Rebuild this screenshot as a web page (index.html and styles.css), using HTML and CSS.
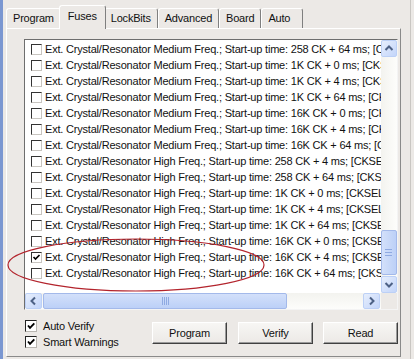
FILE: index.html
```html
<!DOCTYPE html>
<html>
<head>
<meta charset="utf-8">
<title>Fuses</title>
<link rel="stylesheet" href="styles.css">
</head>
<body>
<div class="window">
  <div class="tabs">
    <div class="tab">Program</div>
    <div class="tab active">Fuses</div>
    <div class="tab">LockBits</div>
    <div class="tab">Advanced</div>
    <div class="tab">Board</div>
    <div class="tab last">Auto</div>
  </div>
  <div class="panel">
    <div class="listbox">
      <div class="rows">
        <div class="row"><span class="cb"></span><span class="txt">Ext. Crystal/Resonator Medium Freq.; Start-up time: 258 CK + 64 ms; [CKSEL=1101 SUT=00]</span></div>
        <div class="row"><span class="cb"></span><span class="txt">Ext. Crystal/Resonator Medium Freq.; Start-up time: 1K CK + 0 ms; [CKSEL=1101 SUT=01]</span></div>
        <div class="row"><span class="cb"></span><span class="txt">Ext. Crystal/Resonator Medium Freq.; Start-up time: 1K CK + 4 ms; [CKSEL=1101 SUT=10]</span></div>
        <div class="row"><span class="cb"></span><span class="txt">Ext. Crystal/Resonator Medium Freq.; Start-up time: 1K CK + 64 ms; [CKSEL=1101 SUT=11]</span></div>
        <div class="row"><span class="cb"></span><span class="txt">Ext. Crystal/Resonator Medium Freq.; Start-up time: 16K CK + 0 ms; [CKSEL=1100 SUT=00]</span></div>
        <div class="row"><span class="cb"></span><span class="txt">Ext. Crystal/Resonator Medium Freq.; Start-up time: 16K CK + 4 ms; [CKSEL=1100 SUT=01]</span></div>
        <div class="row"><span class="cb"></span><span class="txt">Ext. Crystal/Resonator Medium Freq.; Start-up time: 16K CK + 64 ms; [CKSEL=1100 SUT=10]</span></div>
        <div class="row"><span class="cb"></span><span class="txt">Ext. Crystal/Resonator High Freq.; Start-up time: 258 CK + 4 ms; [CKSEL=1110 SUT=00]</span></div>
        <div class="row"><span class="cb"></span><span class="txt">Ext. Crystal/Resonator High Freq.; Start-up time: 258 CK + 64 ms; [CKSEL=1110 SUT=01]</span></div>
        <div class="row"><span class="cb"></span><span class="txt">Ext. Crystal/Resonator High Freq.; Start-up time: 1K CK + 0 ms; [CKSEL=1110 SUT=10]</span></div>
        <div class="row"><span class="cb"></span><span class="txt">Ext. Crystal/Resonator High Freq.; Start-up time: 1K CK + 4 ms; [CKSEL=1110 SUT=11]</span></div>
        <div class="row"><span class="cb"></span><span class="txt">Ext. Crystal/Resonator High Freq.; Start-up time: 1K CK + 64 ms; [CKSEL=1111 SUT=00]</span></div>
        <div class="row"><span class="cb"></span><span class="txt">Ext. Crystal/Resonator High Freq.; Start-up time: 16K CK + 0 ms; [CKSEL=1111 SUT=01]</span></div>
        <div class="row"><span class="cb checked"><svg viewBox="0 0 9 9" width="9" height="9"><path d="M1.5 4 L3.5 6 L7.5 2" fill="none" stroke="#000" stroke-width="1.7"/></svg></span><span class="txt">Ext. Crystal/Resonator High Freq.; Start-up time: 16K CK + 4 ms; [CKSEL=1111 SUT=10]</span></div>
        <div class="row"><span class="cb"></span><span class="txt">Ext. Crystal/Resonator High Freq.; Start-up time: 16K CK + 64 ms; [CKSEL=1111 SUT=11]</span></div>
      </div>
      <div class="vscroll">
        <div class="sbtn"><svg viewBox="0 0 14 15" width="14" height="15"><path d="M3.5 9 L7 5.5 L10.5 9" fill="none" stroke="#4d6185" stroke-width="2"/></svg></div>
        <div class="vthumb"><svg viewBox="0 0 8 7" width="8" height="7"><path d="M0 0.5 H7 M0 3.5 H7 M0 6.5 H7" stroke="#8faae2" stroke-width="1"/></svg></div>
        <div class="sbtn"><svg viewBox="0 0 14 15" width="14" height="15"><path d="M3.5 6 L7 9.5 L10.5 6" fill="none" stroke="#4d6185" stroke-width="2"/></svg></div>
      </div>
      <div class="hscroll">
        <div class="sbtn h"><svg viewBox="0 0 15 14" width="15" height="14"><path d="M9 3.5 L5.5 7 L9 10.5" fill="none" stroke="#4d6185" stroke-width="2"/></svg></div>
        <div class="hthumb"><svg viewBox="0 0 7 8" width="7" height="8"><path d="M0.5 0 V8 M2.5 0 V8 M4.5 0 V8 M6.5 0 V8" stroke="#8faae2" stroke-width="1"/></svg></div>
        <div class="sbtn h right"><svg viewBox="0 0 15 14" width="15" height="14"><path d="M6 3.5 L9.5 7 L6 10.5" fill="none" stroke="#4d6185" stroke-width="2"/></svg></div>
      </div>
      <div class="corner"></div>
    </div>
    <div class="bottom">
      <div class="opts">
        <label class="opt"><span class="box"><svg viewBox="0 0 10 10" width="10" height="10"><path d="M2 4.5 L4 6.8 L8.3 2.3" fill="none" stroke="#000" stroke-width="1.9"/></svg></span>Auto Verify</label>
        <label class="opt"><span class="box"><svg viewBox="0 0 10 10" width="10" height="10"><path d="M2 4.5 L4 6.8 L8.3 2.3" fill="none" stroke="#000" stroke-width="1.9"/></svg></span>Smart Warnings</label>
      </div>
      <div class="buttons">
        <button class="btn gap11">Program</button>
        <button class="btn gap10">Verify</button>
        <button class="btn">Read</button>
      </div>
    </div>
  </div>
  <svg class="annot" viewBox="0 0 414 359" width="414" height="359"><ellipse cx="136" cy="265" rx="128" ry="26" fill="none" stroke="#b3242d" stroke-width="1.2"/></svg>
</div>
</body>
</html>
```

FILE: styles.css
```css
* { box-sizing: border-box; }
html, body { margin: 0; padding: 0; }
body {
  background: #ece9e6;
  font-family: "Liberation Sans", Arial, sans-serif;
  font-size: 11px;
  letter-spacing: -0.2px;
  color: #111;
}
.window {
  position: relative;
  width: 411px;
  height: 359px;
  display: flex;
  flex-direction: column;
  padding: 5px 9px 0 3px;
  border-left: 3px solid #7b97d1;
  border-right: 1px solid #c9c6c2;
}
.tabs {
  display: flex;
  align-items: flex-end;
  height: 23px;
}
.tab {
  height: 20px;
  padding: 0 6px;
  line-height: 19px;
  border: 1px solid;
  border-bottom: 0;
  border-color: #fff #7f7f7f transparent #fff;
  border-radius: 3px 3px 0 0;
  white-space: nowrap;
  background: #ece9e6;
}
.tab.last { padding: 0 12px 0 6px; }
.tab.active {
  position: relative;
  z-index: 2;
  height: 24px;
  margin: 0 -2px -1px -2px;
  padding: 0 8px;
  line-height: 20px;
}
.panel {
  height: 329px;
  border: 1px solid;
  border-color: #fff #8a8a8a #8a8a8a #fff;
  padding: 10px 3px 0 17px;
  display: flex;
  flex-direction: column;
}
.listbox {
  width: 374px;
  height: 271px;
  border: 1px solid;
  border-color: #6e6e6e #f4f4f4 #f4f4f4 #6e6e6e;
  background: #fff;
  display: grid;
  grid-template-columns: 356px 16px;
  grid-template-rows: 253px 16px;
}
.rows {
  overflow: hidden;
  padding-top: 1px;
}
.row {
  height: 16px;
  display: flex;
  align-items: center;
  padding-left: 6px;
  white-space: nowrap;
}
.cb {
  flex: none;
  width: 11px;
  height: 11px;
  border: 1px solid;
  border-color: #333 #c8c5c0 #c8c5c0 #333;
  background: #fff;
  margin-right: 3px;
  display: flex;
  align-items: center;
  justify-content: center;
}
.vscroll {
  display: flex;
  flex-direction: column;
  background: linear-gradient(to right, #f3f3ef, #fdfdfb);
}
.sbtn {
  flex: none;
  width: 16px;
  height: 17px;
  border: 1px solid #bcd0f6;
  border-radius: 2px;
  background: linear-gradient(to bottom right, #e6eefc, #c3d5fa);
  display: flex;
  align-items: center;
  justify-content: center;
}
.sbtn.h {
  width: 17px;
  height: 16px;
}
.sbtn.right { margin-right: 1px; }
.vthumb {
  margin-top: auto;
  margin-bottom: 1px;
  height: 45px;
  border: 1px solid #a3b9ea;
  border-radius: 2px;
  background: linear-gradient(to right, #d3e0fa, #bcd0f7);
  display: flex;
  align-items: center;
  justify-content: center;
}
.hscroll {
  display: flex;
  background: linear-gradient(to bottom, #f3f3ef, #fdfdfb);
}
.hthumb {
  width: 244px;
  margin-left: 1px;
  margin-right: auto;
  border: 1px solid #a3b9ea;
  border-radius: 2px;
  background: linear-gradient(to bottom, #d3e0fa, #bcd0f7);
  display: flex;
  align-items: center;
  justify-content: center;
}
.corner { background: #ece9e6; }
.bottom {
  display: flex;
  align-items: flex-start;
  padding-top: 8px;
}
.opts {
  padding-left: 1px;
  display: flex;
  flex-direction: column;
}
.opt {
  height: 16px;
  display: flex;
  align-items: center;
}
.box {
  width: 12px;
  height: 12px;
  margin-right: 6px;
  border: 1px solid;
  border-color: #222 #b9b6b1 #b9b6b1 #222;
  background: #fff;
  display: flex;
  align-items: center;
  justify-content: center;
}
.buttons {
  margin-left: auto;
  margin-right: -1px;
  margin-top: 4px;
  display: flex;
}
.btn {
  width: 75px;
  height: 22px;
  padding: 0;
  font: inherit;
  letter-spacing: inherit;
  color: #111;
  border: 1px solid;
  border-color: #fff #404040 #404040 #fff;
  box-shadow: inset -1px -1px 0 #9a9a9a;
  background: linear-gradient(to bottom, #f7f6f4, #ece9e6);
}
.gap11 { margin-right: 11px; }
.gap10 { margin-right: 10px; }
.annot {
  position: absolute;
  left: -3px;
  top: 0;
  pointer-events: none;
}
```
